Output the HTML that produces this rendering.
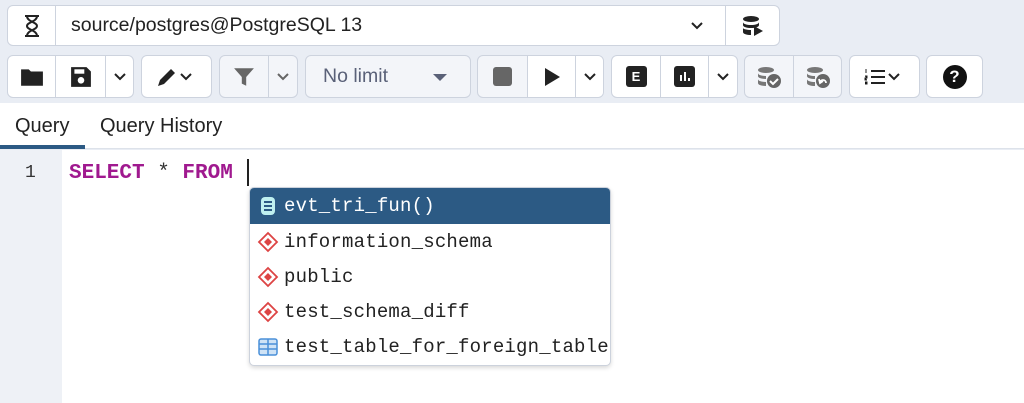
<!DOCTYPE html><html><head><style>
*{box-sizing:border-box;margin:0;padding:0}
body{width:1024px;height:403px;background:#e9edf4;font-family:"Liberation Sans",sans-serif;position:relative;overflow:hidden;color:#222}
.b{position:absolute;background:#fff;border:1px solid #cdd3de;border-radius:6px;display:flex;overflow:hidden}
.b>div{border-right:1px solid #cdd3de;display:flex;align-items:center;justify-content:center;height:100%}
.b>div:last-child{border-right:none}
.g{background:#f3f5f9}
</style></head><body>
<div class="b" style="left:7px;top:5px;width:773px;height:41px">
 <div style="width:48px"><svg width="18" height="24" viewBox="0 0 18 24"><path d="M2 2h14M2 22h14M4 2c0 6 10 6 10 10s-10 4-10 10M14 2c0 6-10 6-10 10s10 4 10 10" stroke="#222" stroke-width="2" fill="none"/></svg></div>
 <div style="flex:1;justify-content:flex-start;padding-left:15px;font-size:19.5px;color:#222;position:relative">source/postgres@PostgreSQL 13<svg style="position:absolute;left:634px;top:15px" width="14" height="10" viewBox="0 0 14 10"><path d="M2 2l5 5 5-5" stroke="#222" stroke-width="2" fill="none"/></svg></div>
 <div style="width:53px"><svg width="24" height="24" viewBox="0 0 24 24"><ellipse cx="10" cy="5" rx="8" ry="3" fill="#222"/><path d="M2 8v3c0 2 4 3 8 3s8-1 8-3V8c0 2-4 3-8 3S2 10 2 8zM2 14v4c0 2 4 3 8 3V16c-4 0-8-1-8-2z" fill="#222"/><path d="M13 12l9 5-9 5z" fill="#222"/></svg></div>
</div>
<div class="b" style="left:7px;top:55px;width:127px;height:43px">
 <div style="width:48px"><svg width="24" height="20" viewBox="0 0 22 18"><path d="M1 2h7l2 2h11v13H1z" fill="#222"/></svg></div>
 <div style="width:50px"><svg width="22" height="22" viewBox="0 0 20 20"><path d="M1 1h14l4 4v14H1z" fill="#222"/><rect x="4" y="3" width="9" height="4" fill="#fff"/><circle cx="10" cy="13" r="3" fill="#fff"/></svg></div>
 <div style="flex:1"><svg width="14" height="10" viewBox="0 0 14 10"><path d="M2 2l5 5 5-5" stroke="#222" stroke-width="2" fill="none"/></svg></div>
</div>
<div class="b" style="left:141px;top:55px;width:71px;height:43px"><div style="width:100%"><svg width="44" height="24" viewBox="0 0 44 22"><path d="M3 20l2-6L16 3l4 4L9 18z" fill="#222"/><path d="M26 8l5 5 5-5" stroke="#222" stroke-width="2" fill="none"/></svg></div></div>
<div class="b g" style="left:219px;top:55px;width:79px;height:43px">
 <div style="width:49px"><svg width="22" height="22" viewBox="0 0 20 20"><path d="M1 2h18l-7 8v8l-4-2v-6z" fill="#666"/></svg></div>
 <div style="flex:1"><svg width="14" height="10" viewBox="0 0 14 10"><path d="M2 2l5 5 5-5" stroke="#666" stroke-width="2" fill="none"/></svg></div>
</div>
<div class="b g" style="left:305px;top:55px;width:166px;height:43px;align-items:center;padding-left:17px;font-size:19.5px;color:#5a6178">No limit<svg style="position:absolute;left:126px;top:17px" width="16" height="9"><path d="M1 1h14l-7 7z" fill="#5a6178"/></svg></div>
<div class="b g" style="left:477px;top:55px;width:127px;height:43px">
 <div style="width:50px"><div style="width:19px;height:19px;background:#666;border-radius:3px"></div></div>
 <div style="width:48px;background:#fff"><svg width="18" height="20"><path d="M2 1l15 9-15 9z" fill="#222"/></svg></div>
 <div style="flex:1;background:#fff"><svg width="14" height="10" viewBox="0 0 14 10"><path d="M2 2l5 5 5-5" stroke="#222" stroke-width="2" fill="none"/></svg></div>
</div>
<div class="b" style="left:611px;top:55px;width:127px;height:43px">
 <div style="width:49px"><div style="width:21px;height:21px;background:#222;border-radius:3px;color:#fff;font-size:13px;font-weight:bold;display:flex;align-items:center;justify-content:center">E</div></div>
 <div style="width:48px"><svg width="21" height="21"><rect width="21" height="21" rx="3" fill="#222"/><path d="M7 9v6M11 6v9M15 12v3" stroke="#fff" stroke-width="2"/></svg></div>
 <div style="flex:1"><svg width="14" height="10" viewBox="0 0 14 10"><path d="M2 2l5 5 5-5" stroke="#222" stroke-width="2" fill="none"/></svg></div>
</div>
<div class="b g" style="left:744px;top:55px;width:98px;height:43px">
 <div style="width:49px"><svg width="26" height="24"><ellipse cx="10" cy="5" rx="8" ry="3" fill="#777"/><path d="M2 8v3c0 2 4 3 8 3v-3c-4 0-8-1-8-3zM2 14v4c0 2 4 3 8 3v-4c-4 0-8-1-8-3z" fill="#777"/><circle cx="18" cy="16" r="7" fill="#666"/><path d="M14 16l3 3 5-5" stroke="#fff" stroke-width="2" fill="none"/></svg></div>
 <div style="flex:1"><svg width="26" height="24"><ellipse cx="10" cy="5" rx="8" ry="3" fill="#777"/><path d="M2 8v3c0 2 4 3 8 3v-3c-4 0-8-1-8-3zM2 14v4c0 2 4 3 8 3v-4c-4 0-8-1-8-3z" fill="#777"/><circle cx="18" cy="16" r="7" fill="#666"/><path d="M15 18c0-4 6-4 6 0M14 14l1 4 3-2" stroke="#fff" stroke-width="1.8" fill="none"/></svg></div>
</div>
<div class="b" style="left:849px;top:55px;width:71px;height:43px"><div style="width:100%"><svg width="44" height="20"><path d="M3 2v4M2 9h2v2H2v2h2M2 15h2v2H2M2 17h2" stroke="#222" stroke-width="1"/><path d="M8 4h14M8 10h14M8 16h14" stroke="#222" stroke-width="2"/><path d="M26 7l5 5 5-5" stroke="#222" stroke-width="2" fill="none"/></svg></div></div>
<div class="b" style="left:926px;top:55px;width:57px;height:43px"><div style="width:100%"><div style="width:24px;height:24px;border-radius:50%;background:#111;color:#fff;font-weight:bold;font-size:17px;display:flex;align-items:center;justify-content:center">?</div></div></div>
<div style="position:absolute;left:0;top:103px;width:1024px;height:46px;background:#fff;border-bottom:1px solid #dde2ea"></div>
<div style="position:absolute;left:15px;top:115px;font-size:20px;color:#222">Query</div>
<div style="position:absolute;left:100px;top:115px;font-size:20px;color:#222">Query History</div>
<div style="position:absolute;left:0;top:145px;width:85px;height:4px;background:#2c5a84"></div>
<div style="position:absolute;left:0;top:150px;width:1024px;height:253px;background:#fff"></div>
<div style="position:absolute;left:0;top:150px;width:62px;height:253px;background:#eef1f6"></div>
<div style="position:absolute;left:25px;top:163px;font:18px 'Liberation Mono',monospace;color:#333">1</div>
<div style="position:absolute;left:69px;top:162px;font:bold 21px 'Liberation Mono',monospace;color:#a0198f;white-space:pre">SELECT <span style="color:#333;font-weight:normal">*</span> FROM</div>
<div style="position:absolute;left:247px;top:159px;width:2px;height:27px;background:#222"></div>
<div style="position:absolute;left:249px;top:187px;width:362px;height:179px;background:#fff;border:1px solid #ccd2dc;border-radius:5px;box-shadow:0 2px 4px rgba(0,0,0,.15);overflow:hidden;font:19px 'Liberation Mono',monospace;color:#222;letter-spacing:.2px">
 <div style="height:36px;background:#2c5a84;color:#fff;display:flex;align-items:center;padding-left:8px"><svg width="20" height="20" style="margin-right:6px"><rect x="3" y="1" width="14" height="18" rx="4" fill="#bff0f0"/><path d="M6 6h8M6 10h8M6 14h8" stroke="#2c5a84" stroke-width="2"/></svg>evt_tri_fun()</div>
 <div style="height:35px;display:flex;align-items:center;padding-left:7px"><svg width="22" height="22" style="margin-right:5px"><path d="M11 2l9 9-9 9-9-9z" fill="none" stroke="#d44" stroke-width="1.8"/><path d="M11 7l4 4-4 4-4-4z" fill="#d44"/></svg>information_schema</div>
 <div style="height:35px;display:flex;align-items:center;padding-left:7px"><svg width="22" height="22" style="margin-right:5px"><path d="M11 2l9 9-9 9-9-9z" fill="none" stroke="#d44" stroke-width="1.8"/><path d="M11 7l4 4-4 4-4-4z" fill="#d44"/></svg>public</div>
 <div style="height:35px;display:flex;align-items:center;padding-left:7px"><svg width="22" height="22" style="margin-right:5px"><path d="M11 2l9 9-9 9-9-9z" fill="none" stroke="#d44" stroke-width="1.8"/><path d="M11 7l4 4-4 4-4-4z" fill="#d44"/></svg>test_schema_diff</div>
 <div style="height:35px;display:flex;align-items:center;padding-left:7px"><svg width="22" height="20" style="margin-right:5px"><rect x="2" y="2" width="18" height="16" rx="2" fill="#cfe3f6" stroke="#4a90d9" stroke-width="1.5"/><path d="M2 7h18M2 12h18M11 2v16" stroke="#4a90d9" stroke-width="1.5"/></svg>test_table_for_foreign_table</div>
</div>
</body></html>
